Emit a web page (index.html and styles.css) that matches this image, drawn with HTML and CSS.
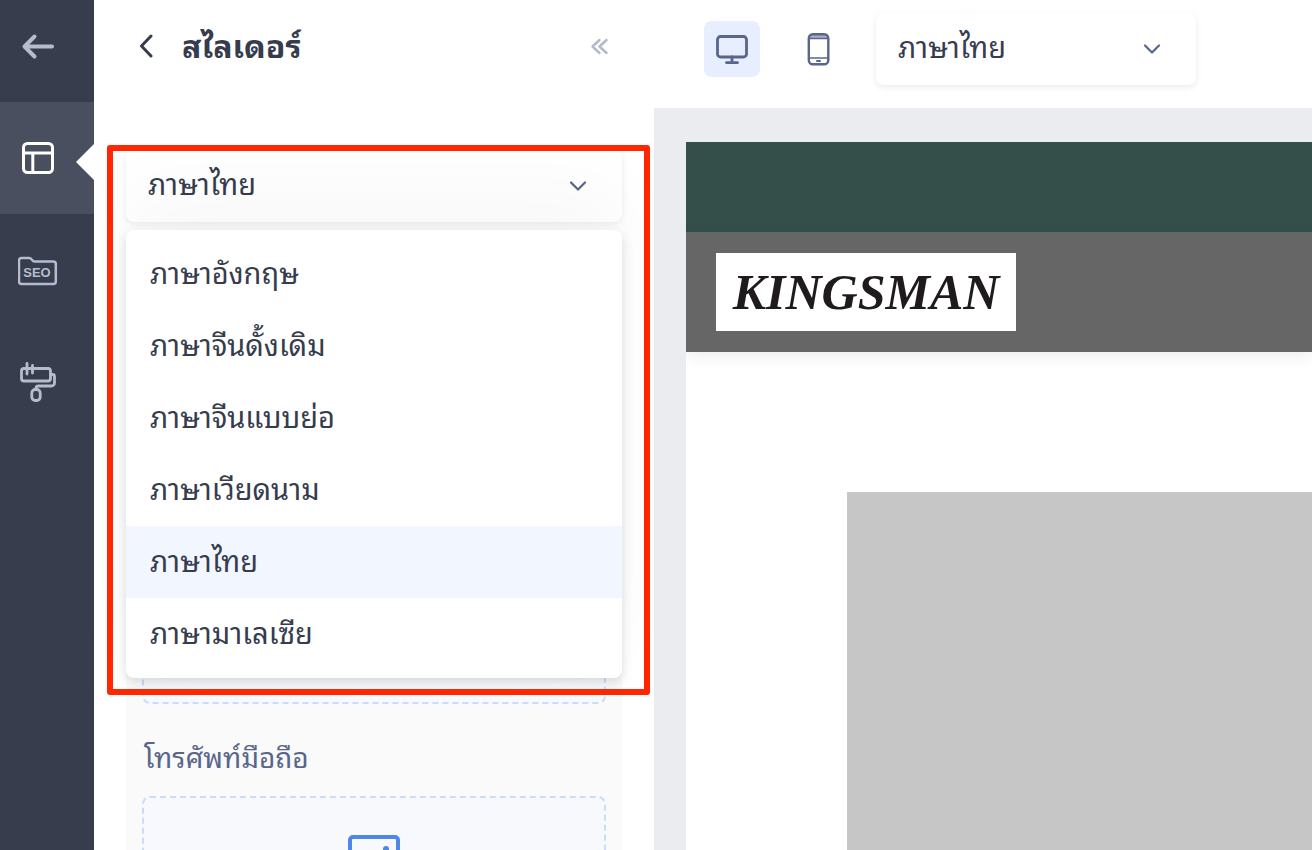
FILE: index.html
```html
<!DOCTYPE html>
<html lang="th">
<head>
<meta charset="utf-8">
<meta name="viewport" content="width=device-width, initial-scale=1">
<title>สไลเดอร์</title>
<link rel="stylesheet" href="styles.css">
</head>
<body>
<div class="app">
  <nav class="rail">
    <button class="rail-item rail-back" aria-label="Back">
      <svg width="40" height="40" viewBox="0 0 40 40" fill="none" stroke="currentColor" stroke-width="4" stroke-linecap="round" stroke-linejoin="round"><path d="M34 20.500H7M16.500 10.500L6.500 20.500L16.500 30.500"/></svg>
    </button>
    <button class="rail-item rail-active" aria-label="Layout">
      <svg width="40" height="40" viewBox="0 0 40 40" fill="none" stroke="currentColor" stroke-width="3"><rect x="5.500" y="5.500" width="29" height="29" rx="4"/><path d="M5.500 15H34.500M14.800 15V34"/></svg>
    </button>
    <button class="rail-item" aria-label="SEO">
      <svg width="40" height="40" viewBox="0 0 40 40" fill="none" stroke="currentColor" stroke-width="2.500" stroke-linejoin="round"><path d="M3.500 8h8c1.800 0 3 3.500 4.800 3.500h19a2.500 2.500 0 0 1 2.500 2.500v17.500a2.500 2.500 0 0 1-2.500 2.500H3.500a2.500 2.500 0 0 1-2.500-2.500V10.500a2.500 2.500 0 0 1 2.500-2.500z"/><text class="seo-text" x="19" y="27" text-anchor="middle">SEO</text></svg>
    </button>
    <button class="rail-item" aria-label="Design">
      <svg width="40" height="40" viewBox="0 0 40 40" fill="none" stroke="currentColor" stroke-width="2.800" stroke-linecap="round" stroke-linejoin="round"><rect x="3.500" y="6.500" width="29" height="12.500" rx="2.500"/><path d="M9 1.500V12M14.500 3.500V11M32.500 12.500h2a2 2 0 0 1 2 2v6.500a3 3 0 0 1-3 3H20.500a2.500 2.500 0 0 0-2.500 2.500V27"/><rect x="13.800" y="27.500" width="8.400" height="11" rx="3.500"/></svg>
    </button>
  </nav>

  <aside class="panel">
    <header class="panel-head">
      <button class="icon-button" aria-label="Previous">
        <svg width="24" height="24" viewBox="0 0 24 24" fill="none" stroke="currentColor" stroke-width="3" stroke-linecap="round" stroke-linejoin="round"><path d="M17 2L7.500 12L17 22"/></svg>
      </button>
      <h1 class="panel-title">สไลเดอร์</h1>
      <button class="icon-button icon-collapse" aria-label="Collapse">
        <svg width="24" height="24" viewBox="0 0 24 24" fill="none" stroke="currentColor" stroke-width="2.400" stroke-linecap="round" stroke-linejoin="round"><path d="M11.500 6L4.500 12.500L11.500 19M18.500 6L11.500 12.500L18.500 19"/></svg>
      </button>
    </header>
    <div class="panel-body">
      <div class="language">
        <div class="select-box">
          <select class="select" aria-label="ภาษา"><option>ภาษาไทย</option></select>
          <svg class="chevron" width="20" height="20" viewBox="0 0 20 20" fill="none" stroke="currentColor" stroke-width="2.200" stroke-linecap="round" stroke-linejoin="round"><path d="M3 6.500L10 13.500L17 6.500"/></svg>
        </div>
        <ul class="menu">
          <li><button class="option">ภาษาอังกฤษ</button></li>
          <li><button class="option">ภาษาจีนดั้งเดิม</button></li>
          <li><button class="option">ภาษาจีนแบบย่อ</button></li>
          <li><button class="option">ภาษาเวียดนาม</button></li>
          <li><button class="option option-selected">ภาษาไทย</button></li>
          <li><button class="option">ภาษามาเลเซีย</button></li>
        </ul>
        <div class="highlight"></div>
      </div>
      <section class="card">
        <div class="upload"></div>
        <h2 class="card-label">โทรศัพท์มือถือ</h2>
        <div class="upload">
          <svg width="52" height="48" viewBox="0 0 52 48" fill="none" stroke="#4e87e8" stroke-width="4"><rect x="2" y="3" width="48" height="43" rx="3"/><circle cx="38" cy="15" r="3" fill="#4e87e8" stroke="none"/><path d="M2 38L18 22L40 45"/></svg>
        </div>
      </section>
    </div>
  </aside>

  <main class="stage">
    <header class="toolbar">
      <button class="device device-active" aria-label="Desktop">
        <svg width="36" height="36" viewBox="0 0 36 36" fill="none" stroke="currentColor" stroke-width="2.800" stroke-linecap="round"><rect x="3.500" y="5.500" width="29" height="20.500" rx="3"/><path d="M18 26V31M12.500 31.700H23.500"/></svg>
      </button>
      <button class="device" aria-label="Mobile">
        <svg width="36" height="36" viewBox="0 0 36 36" fill="none" stroke="currentColor" stroke-width="2.400"><path d="M8.500 7Q9 3 12 3H25Q28 3 28.500 7z" fill="#a6afc3" stroke="none"/><rect x="8.800" y="3.300" width="19.500" height="30" rx="4"/><path d="M9 7.500H28M9 27H28" stroke-width="1.500"/><path d="M17 30H20" stroke-width="2" stroke-linecap="round"/></svg>
      </button>
      <div class="select-box toolbar-select">
        <select class="select" aria-label="ภาษา"><option>ภาษาไทย</option></select>
        <svg class="chevron" width="20" height="20" viewBox="0 0 20 20" fill="none" stroke="currentColor" stroke-width="2.200" stroke-linecap="round" stroke-linejoin="round"><path d="M3 6.500L10 13.500L17 6.500"/></svg>
      </div>
    </header>
    <div class="canvas">
      <div class="site">
        <div class="site-top"></div>
        <div class="site-header"><div class="site-logo">KINGSMAN</div></div>
        <div class="site-hero"></div>
      </div>
    </div>
  </main>
</div>
</body>
</html>
```
FILE: styles.css
```css
* { box-sizing: border-box; }
body {
  margin: 0;
  font-family: "Noto Sans Thai Looped", "Loma", "Noto Sans Thai", "Noto Sans", sans-serif;
  font-size: 29px;
  color: #363c4d;
}
button, select {
  font: inherit;
  color: inherit;
  border: 0;
  background: none;
  padding: 0;
  margin: 0;
}
svg { display: block; }
.app {
  display: flex;
  height: 100vh;
  overflow: hidden;
  background: #fff;
}

.rail {
  flex: 0 0 94px;
  display: flex;
  flex-direction: column;
  background: #373d4c;
  color: #b5bccd;
}
.rail-item {
  position: relative;
  height: 112px;
  padding-right: 18px;
  display: flex;
  align-items: center;
  justify-content: center;
}
.rail-back {
  height: 102px;
  padding-bottom: 10px;
}
.rail-active {
  background: #494f5e;
  color: #fff;
}
.rail-active::after {
  content: "";
  position: absolute;
  right: 0;
  top: 42px;
  border: 18px solid transparent;
  border-left: 0;
  border-right-color: #fff;
}
.seo-text {
  font-family: "Liberation Sans", sans-serif;
  font-size: 13px;
  font-weight: 700;
  fill: currentColor;
  stroke: none;
}

.panel {
  flex: 0 0 560px;
  display: flex;
  flex-direction: column;
  overflow: hidden;
}
.panel-head {
  flex: 0 0 108px;
  display: flex;
  align-items: center;
  gap: 24px;
  padding: 0 40px 16px;
}
.panel-title {
  flex: 1;
  margin: 0;
  padding-bottom: 4px;
  font-size: 32px;
  line-height: 48px;
  font-weight: 700;
}
.icon-collapse { margin-right: 2px; color: #b3b9c9; }
.panel-body {
  flex: 1;
  padding: 42px 32px 0;
  overflow: hidden;
}
.language {
  position: relative;
  z-index: 1;
}
.select-box {
  position: relative;
  height: 72px;
  border-radius: 8px;
  background: #fff;
  box-shadow: 0 2px 6px rgba(55, 61, 76, 0.1);
}
.select {
  appearance: none;
  width: 100%;
  height: 100%;
  padding: 0 60px 8px 22px;
}
.chevron {
  position: absolute;
  right: 34px;
  top: 26px;
  color: #59658a;
  pointer-events: none;
}
.menu {
  position: absolute;
  top: 80px;
  left: 0;
  right: 0;
  margin: 0;
  padding: 8px 0;
  list-style: none;
  border-radius: 8px;
  background: #fff;
  box-shadow: 0 4px 12px rgba(0, 0, 0, 0.14), 0 -40px 80px rgba(0, 0, 0, 0.03);
}
.option {
  display: block;
  width: 100%;
  height: 72px;
  padding: 0 24px 6px;
  text-align: left;
}
.option-selected { background: #f2f6ff; }
.highlight {
  position: absolute;
  top: -5px;
  left: -19px;
  right: -28px;
  height: 550px;
  border: 6px solid #ff2600;
  border-radius: 3px;
  pointer-events: none;
}
.card {
  margin-top: 80px;
  padding: 16px;
  background: #fafafa;
}
.upload {
  height: 386px;
  padding-top: 36px;
  display: flex;
  justify-content: center;
  border: 2px dashed #c9dcff;
  border-radius: 8px;
  background: #f7f9fd;
}
.card-label {
  margin: 0;
  padding: 28px 2px 16px;
  font-size: 28px;
  line-height: 48px;
  font-weight: 400;
  color: #59658a;
}

.stage {
  flex: 1;
  min-width: 0;
  display: flex;
  flex-direction: column;
}
.toolbar {
  flex: 0 0 108px;
  display: flex;
  align-items: center;
  gap: 30px;
  padding: 0 50px 10px;
}
.device {
  flex: 0 0 56px;
  height: 56px;
  display: flex;
  align-items: center;
  justify-content: center;
  border-radius: 8px;
  color: #59658a;
}
.device-active { background: #e6eeff; }
.toolbar-select { flex: 0 1 320px; }
.canvas {
  flex: 1;
  display: flex;
  padding: 34px 0 0 32px;
  background: #ebecf0;
}
.site {
  flex: 1;
  display: flex;
  flex-direction: column;
  overflow: hidden;
  background: #fff;
}
.site-top {
  height: 90px;
  background: #344f49;
}
.site-header {
  height: 120px;
  display: flex;
  align-items: center;
  padding: 0 30px;
  background: #666;
  box-shadow: 0 4px 16px rgba(0, 0, 0, 0.08);
}
.site-logo {
  width: 300px;
  line-height: 78px;
  text-align: center;
  background: #fff;
  color: #1f1b1c;
  font-family: "Liberation Serif", serif;
  font-size: 50px;
  font-weight: 700;
  font-style: italic;
}
.site-hero {
  flex: 1;
  margin: 140px 0 0 161px;
  background: #c6c6c6;
}
```
